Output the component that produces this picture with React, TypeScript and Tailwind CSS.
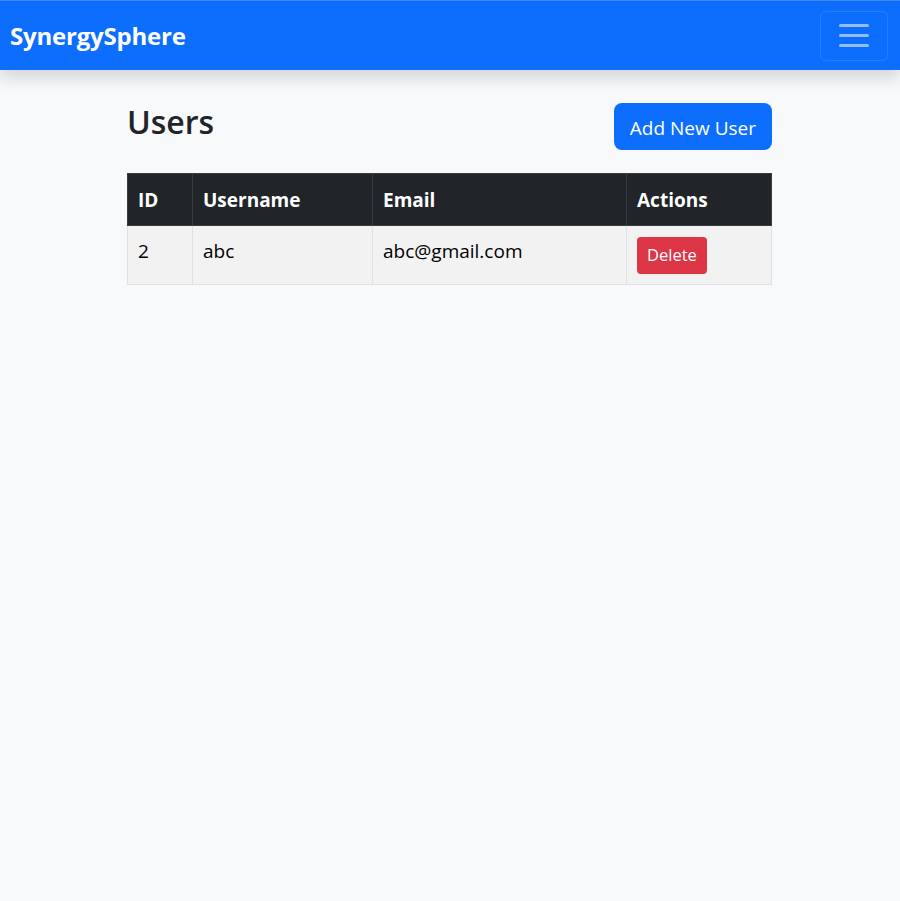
const users = [{ id: 2, username: "abc", email: "abc@gmail.com" }];

function App() {
  return (
    <div
      className="min-h-[901px] bg-[#f8f9fa] text-[#212529]"
      style={{ fontFamily: '"Open Sans", "Noto Sans", sans-serif' }}
    >
      <nav className="h-[70px] bg-[#0d6efd] border-t border-[#3d8bfd] flex items-center justify-between pl-[10px] pr-[12px] shadow-[0_8px_16px_rgba(0,0,0,0.15)]">
        <span className="text-white font-bold text-[24px] tracking-[-0.2px]">SynergySphere</span>
        <button className="w-[68px] h-[50px] rounded-[6px] border border-white/10 flex flex-col items-center justify-center gap-[7px]">
          <span className="block w-[30px] h-[3px] rounded bg-white/55" />
          <span className="block w-[30px] h-[3px] rounded bg-white/55" />
          <span className="block w-[30px] h-[3px] rounded bg-white/55" />
        </button>
      </nav>

      <div className="w-[645px] ml-[127px] pt-[33px]">
        <div className="flex justify-between items-center mb-[23px]">
          <h1 className="text-[32px] font-semibold leading-[1.2] -mt-[8px]">Users</h1>
          <button className="h-[47px] px-[16px] pt-[3px] rounded-[8px] bg-[#0d6efd] text-white text-[19px]">
            Add New User
          </button>
        </div>

        <table className="w-full border-collapse text-[19px]">
          <thead>
            <tr className="bg-[#212529] text-white h-[52px]">
              <th className="w-[65px] border border-[#373b3e] text-left font-bold px-[10px] pt-[1px]">ID</th>
              <th className="w-[180px] border border-[#373b3e] text-left font-bold px-[10px] pt-[1px]">Username</th>
              <th className="w-[254px] border border-[#373b3e] text-left font-bold px-[10px] pt-[1px]">Email</th>
              <th className="border border-[#373b3e] text-left font-bold px-[10px] pt-[1px]">Actions</th>
            </tr>
          </thead>
          <tbody>
            {users.map((u) => (
              <tr key={u.id} className="bg-[#f2f2f2] h-[59px] text-[#000]">
                <td className="border border-[#dee2e6] px-[10px] pb-[8px]">{u.id}</td>
                <td className="border border-[#dee2e6] px-[10px] pb-[8px]">{u.username}</td>
                <td className="border border-[#dee2e6] px-[10px] pb-[8px]">{u.email}</td>
                <td className="border border-[#dee2e6] px-[10px]">
                  <button className="h-[37px] px-[10px] rounded-[4px] bg-[#dc3545] text-white text-[16.5px]">
                    Delete
                  </button>
                </td>
              </tr>
            ))}
          </tbody>
        </table>
      </div>
    </div>
  );
}

export default App;
